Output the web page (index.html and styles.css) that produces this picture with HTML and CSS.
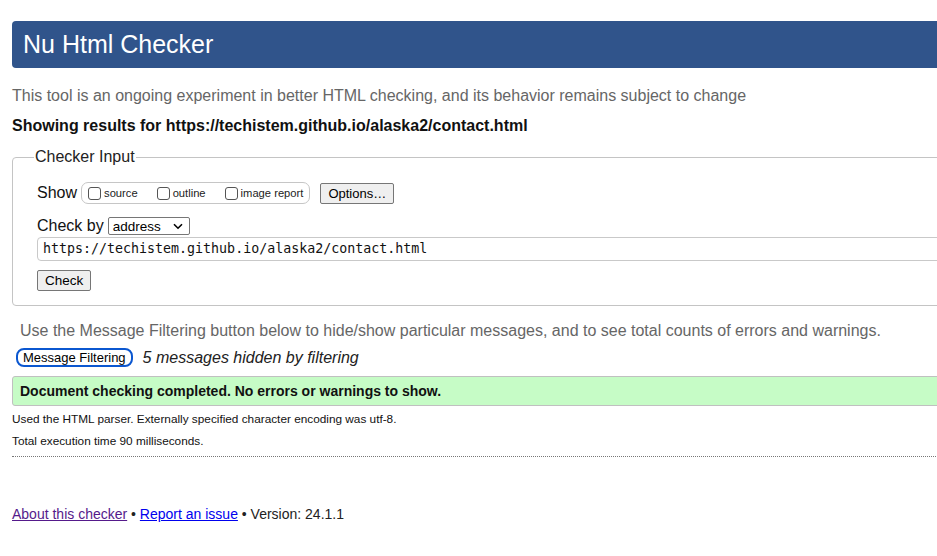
FILE: index.html
```html
<!DOCTYPE html>
<html lang="en">
<head>
<meta charset="utf-8">
<title>Showing results for contact.html - Nu Html Checker</title>
<link rel="stylesheet" href="styles.css">
</head>
<body>
<div class="page">
  <h1 class="banner">Nu Html Checker</h1>
  <p class="intro">This tool is an ongoing experiment in better HTML checking, and its behavior remains subject to change</p>
  <p class="showing">Showing results for https://techistem.github.io/alaska2/contact.html</p>
  <fieldset class="input-box">
    <legend>Checker Input</legend>
    <div class="row show-row">
      <span class="label">Show</span>
      <span class="pill">
        <label class="opt"><input type="checkbox"><span>source</span></label>
        <label class="opt"><input type="checkbox"><span>outline</span></label>
        <label class="opt"><input type="checkbox"><span>image report</span></label>
      </span>
      <button class="btn options">Options…</button>
    </div>
    <div class="row by-row">
      <span class="label">Check by</span>
      <span class="select"><span>address</span><svg width="10" height="7" viewBox="0 0 10 7"><path d="M1 1.2 L5 5.2 L9 1.2" fill="none" stroke="#000" stroke-width="1.6"/></svg></span>
    </div>
    <div class="url">https://techistem.github.io/alaska2/contact.html</div>
    <button class="btn check">Check</button>
  </fieldset>
  <p class="filter-note">Use the Message Filtering button below to hide/show particular messages, and to see total counts of errors and warnings.</p>
  <div class="filter-row">
    <button class="filter-btn">Message Filtering</button>
    <em class="hidden-count">5 messages hidden by filtering</em>
  </div>
  <div class="success">Document checking completed. No errors or warnings to show.</div>
  <p class="details">Used the HTML parser. Externally specified character encoding was utf-8.</p>
  <p class="details">Total execution time 90 milliseconds.</p>
  <hr class="dotted">
  <p class="footer"><a class="visited" href="#">About this checker</a> • <a class="link" href="#">Report an issue</a> • Version: 24.1.1</p>
</div>
</body>
</html>
```
FILE: styles.css
```css
html {
  overflow: hidden;
}
body {
  margin: 0;
  background: #fff;
  font-family: "Liberation Sans", Arial, sans-serif;
  color: #000;
}
.page {
  width: 1000px;
  padding: 21px 0 0 12px;
}
.banner {
  margin: 0;
  height: 47px;
  box-sizing: border-box;
  padding: 8px 11px 0;
  background: #30548b;
  color: #fff;
  font-weight: normal;
  font-size: 25px;
  line-height: 30px;
  border-radius: 4px;
}
.intro {
  margin: 18px 0 0;
  font-size: 16px;
  line-height: 19px;
  color: #666;
}
.showing {
  margin: 11px 0 0;
  font-size: 16px;
  line-height: 19px;
  font-weight: bold;
  color: #111;
}
.input-box {
  margin: 13px 0 0;
  padding: 9px 0 14px 24px;
  border: 1px solid #c4c4c4;
  border-radius: 4px;
}
.input-box legend {
  padding: 0 1px;
  margin-left: -3px;
  font-size: 16px;
  color: #222;
}
.row {
  display: flex;
  align-items: center;
}
.label {
  font-size: 16px;
  color: #111;
}
.show-row {
  margin-top: 7px;
}
.pill {
  display: flex;
  align-items: center;
  margin-left: 4px;
  height: 20px;
  padding: 0 6px 0 6px;
  border: 1px solid #c6c6c6;
  border-radius: 7px;
}
.opt {
  display: flex;
  align-items: center;
  font-size: 11.2px;
  color: #222;
  margin-right: 19px;
}
.opt:last-child {
  margin-right: 0;
}
.opt input {
  margin: 0 3px 0 0;
  width: 13px;
  height: 13px;
  appearance: none;
  border: 1px solid #555;
  border-radius: 3px;
  background: #fff;
}
.btn {
  font-family: "Liberation Sans", Arial, sans-serif;
  font-size: 13.5px;
  color: #000;
  background: #efefef;
  border: 1px solid #767676;
  border-radius: 2px;
  padding: 0 7px;
  height: 21px;
}
.options {
  margin-left: 10px;
  padding: 0 7px;
  font-size: 13px;
}
.by-row {
  margin-top: 13px;
}
.select {
  display: inline-flex;
  align-items: center;
  justify-content: space-between;
  margin-left: 4px;
  width: 82px;
  height: 18px;
  box-sizing: border-box;
  border: 1px solid #767676;
  border-radius: 2px;
  padding: 0 6px 0 4px;
  font-size: 13.5px;
  color: #000;
}
.url {
  margin-top: 2px;
  height: 24px;
  box-sizing: border-box;
  border: 1px solid #c9c9c9;
  border-radius: 4px;
  padding: 0 5px;
  font-family: "DejaVu Sans Mono", monospace;
  font-size: 13.3px;
  line-height: 22px;
  color: #111;
}
.check {
  margin-top: 9px;
  display: block;
}
.filter-note {
  margin: 15px 0 0 8px;
  font-size: 16px;
  line-height: 19px;
  color: #666;
}
.filter-row {
  display: flex;
  align-items: center;
  margin: 8px 0 0 4px;
}
.filter-btn {
  font-family: "Liberation Sans", Arial, sans-serif;
  font-size: 13px;
  color: #000;
  background: #fff;
  border: 2px solid #0b57d0;
  border-radius: 8px;
  height: 19px;
  padding: 0 5px;
  line-height: 14px;
}
.hidden-count {
  margin-left: 10px;
  font-size: 16px;
  color: #222;
}
.success {
  margin-top: 9px;
  height: 30px;
  box-sizing: border-box;
  background: #c6fcc6;
  border: 1px solid #c0c0c0;
  border-radius: 3px;
  padding: 0 7px;
  font-size: 14px;
  font-weight: bold;
  line-height: 28px;
  color: #111;
}
.details {
  margin: 6px 0 0;
  font-size: 11.8px;
  line-height: 14px;
  color: #111;
}
.details + .details {
  margin-top: 8px;
}
.dotted {
  margin: 8px 0 0;
  border: 0;
  border-top: 1px dotted #777;
}
.footer {
  margin: 49px 0 0;
  font-size: 14px;
  color: #222;
}
.visited {
  color: #551a8b;
}
.link {
  color: #0000ee;
}
```
